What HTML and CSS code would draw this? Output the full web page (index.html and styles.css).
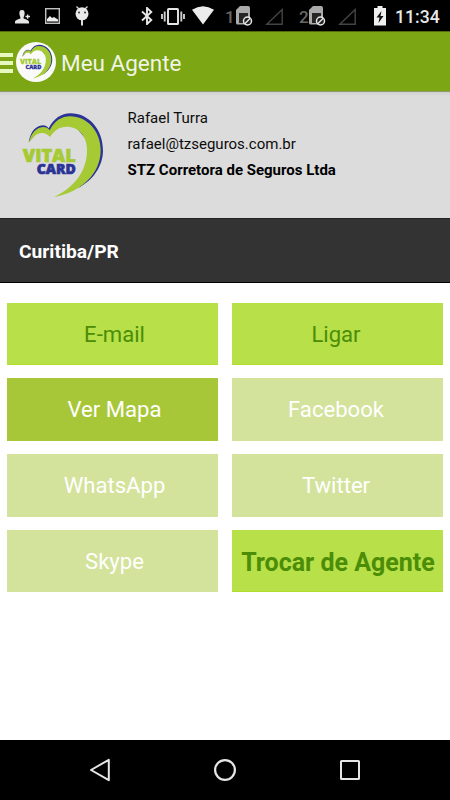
FILE: index.html
```html
<!DOCTYPE html>
<html lang="pt-BR">
<head>
<meta charset="utf-8">
<title>Meu Agente</title>
<link rel="stylesheet" href="styles.css">
</head>
<body>
<div class="screen">
  <div class="status">
    <svg class="person" width="15" height="14" viewBox="0 0 15 14"><path fill="#e6e6e6" d="M7 0C4.700 0 4 2 4.500 4.500 4.700 6 5.500 7 5.500 8.200 3.500 9.500 0 9.800 0 12v1.500h14V12C14 9.800 10.500 9.500 8.500 8.200 8.500 7 9.300 6 9.500 4.500 10 2 9.300 0 7 0zM12 4.500h1.300v1.300H15v1.400h-1.700v1.500H12V7.200h-1.500V5.800H12z"/></svg>
    <svg class="picture" width="15" height="16" viewBox="0 0 15 16"><rect x=".7" y=".7" width="13.600" height="14.600" fill="none" stroke="#c2c2c2" stroke-width="1.400"/><path fill="#eee" d="M2 13.500V11l3-3 2 2 2-1 1.500 1 2.500 1.500v2z"/></svg>
    <svg class="bot" width="14" height="20" viewBox="0 0 14 20"><path d="M1.500.5 4 3M12.500.5 10 3" stroke="#ddd" stroke-width="1.300"/><ellipse cx="7" cy="7.800" rx="6.500" ry="6.500" fill="#e8e8e8"/><path d="M7 14v5.500" stroke="#ddd" stroke-width="2"/><circle cx="4" cy="6.500" r="1" fill="#333"/><circle cx="10" cy="6.500" r="1" fill="#333"/></svg>
    <svg class="bluetooth" width="12" height="18" viewBox="0 0 12 18"><path d="M1 4.500l9.300 8.500L6 17V1l4.300 4L1 13.500" fill="none" stroke="#e6e6e6" stroke-width="1.900"/></svg>
    <svg class="vibrate" width="24" height="17" viewBox="0 0 24 17"><rect x="7" y="1" width="10" height="15" rx=".6" fill="none" stroke="#e6e6e6" stroke-width="1.900"/><path d="M1 6v5M23 6v5M3.700 3.500v10M20.300 3.500v10" stroke="#ccc" stroke-width="1.900"/></svg>
    <svg class="wifi" width="22" height="19" viewBox="0 0 22 19"><path fill="#ececec" d="M0 3.800Q11-3.200 22 3.800L11 18.500z"/></svg>
    <span class="slot slot-1">1</span>
    <svg class="sim" width="17" height="20" viewBox="0 0 17 20"><path d="M4 0h8q2 0 2 2v16.500H1.500Q0 18.500 0 17V4z" fill="#aaa"/><path d="M3 7h9v10H3z" fill="#262626"/><circle cx="11.500" cy="15" r="4" fill="#222" stroke="#e8e8e8" stroke-width="1.500"/><path d="M8.800 17.700l5.400-5.400" stroke="#e8e8e8" stroke-width="1.400"/></svg>
    <svg class="signal" width="18" height="17" viewBox="0 0 18 17"><path d="M1.800 16.200L17.200 1.500v14.700z" fill="none" stroke="#444" stroke-width="1.400"/></svg>
    <span class="slot slot-2">2</span>
    <svg class="sim sim-2" width="17" height="20" viewBox="0 0 17 20"><path d="M4 0h8q2 0 2 2v16.500H1.500Q0 18.500 0 17V4z" fill="#aaa"/><path d="M3 7h9v10H3z" fill="#262626"/><circle cx="11.500" cy="15" r="4" fill="#222" stroke="#e8e8e8" stroke-width="1.500"/><path d="M8.800 17.700l5.400-5.400" stroke="#e8e8e8" stroke-width="1.400"/></svg>
    <svg class="signal" width="18" height="17" viewBox="0 0 18 17"><path d="M1.800 16.200L17.200 1.500v14.700z" fill="none" stroke="#444" stroke-width="1.400"/></svg>
    <svg class="battery" width="12" height="20" viewBox="0 0 12 20"><path fill="#f0f0f0" d="M3.500 0h5v2H12v17.500H0V2h3.500z"/><path fill="#111" d="M7.500 5L2.500 11.500h3L4.500 17l5-7h-3z"/></svg>
    <span class="clock">11:34</span>
  </div>

  <header class="bar">
    <div class="menu"><i></i><i></i><i></i></div>
    <div class="avatar">
      <svg width="40" height="40" viewBox="8 19 299 299">
        <g id="logo">
          <path fill="#2b3396" d="M56 127C61 97 76 77 98 76C106 76 112 79 116 85C131 56 154 40 181 40C236 40 280 88 279 154C278 200 248 242 205 264C240 225 255 190 255 150L180 60L119 96L90 88Z"/>
          <path fill="#a6ca34" d="M56 129C62 101 79 82 99 81C108 81 115 84 119 91C134 62 155 49 180 49C231 49 272 93 272 151C272 220 214 278 132 291C190 264 231 216 231 150C231 108 206 80 170 80C149 80 132 91 120 111C111 101 101 97 89 100C75 104 66 114 56 129Z"/>
          <text class="logo-text" x="38" y="186" textLength="159" lengthAdjust="spacingAndGlyphs" font-size="53" fill="#a6ca34" stroke="#a6ca34">VITAL</text>
          <text class="logo-text" x="80" y="222" textLength="117" lengthAdjust="spacingAndGlyphs" font-size="41" fill="#2b3396" stroke="#2b3396">CARD</text>
        </g>
      </svg>
    </div>
    <h1 class="title">Meu Agente</h1>
  </header>

  <section class="agent">
    <svg class="agent-logo" width="110" height="110" viewBox="0 0 330 330"><use href="#logo"/></svg>
    <div class="agent-info">
      <div class="name">Rafael Turra</div>
      <div class="mail">rafael@tzseguros.com.br</div>
      <div class="company">STZ Corretora de Seguros Ltda</div>
    </div>
  </section>
  <div class="city"><span>Curitiba/PR</span></div>

  <main class="actions">
    <div class="btn lime left"><span>E-mail</span></div>
    <div class="btn lime right"><span>Ligar</span></div>
    <div class="btn olive left"><span>Ver Mapa</span></div>
    <div class="btn off right"><span>Facebook</span></div>
    <div class="btn off left"><span>WhatsApp</span></div>
    <div class="btn off right"><span>Twitter</span></div>
    <div class="btn off left"><span>Skype</span></div>
    <div class="btn lime strong"><span>Trocar de Agente</span></div>
  </main>

  <nav class="nav">
    <svg width="24" height="24" viewBox="0 0 24 24"><path d="M3 12L20.800 1.800v20.400z" fill="none" stroke="#e6e6e6" stroke-width="2" stroke-linejoin="round"/></svg>
    <svg width="24" height="24" viewBox="0 0 24 24"><circle cx="12" cy="12" r="9.900" fill="none" stroke="#e6e6e6" stroke-width="2.200"/></svg>
    <svg width="24" height="24" viewBox="0 0 24 24"><rect x="3" y="3" width="18" height="18" rx=".5" fill="none" stroke="#e6e6e6" stroke-width="2"/></svg>
  </nav>
</div>
</body>
</html>
```
FILE: styles.css
```css
* { box-sizing: border-box; }
body { margin: 0; font-family: Roboto, sans-serif; }
svg { display: block; flex: none; }
.screen { width: 450px; height: 800px; display: flex; flex-direction: column; background: #fff; overflow: hidden; }

.status { height: 31px; flex: none; background: #000; display: flex; align-items: center; padding-left: 15px; }
.person { margin-top: 3px; }
.picture { margin-left: 15px; }
.bot { margin-left: 15px; }
.bluetooth { margin-left: 52px; }
.vibrate { margin-left: 8px; margin-top: 1px; }
.wifi { margin-left: 7px; }
.slot { color: #686868; font-size: 17px; font-weight: 500; line-height: 20px; padding-top: 2px; width: 10px; flex: none; }
.slot-1 { margin-left: 11px; }
.slot-2 { margin-left: 16px; }
.sim { margin-left: 1px; }
.sim-2 { margin-left: 0; }
.signal { margin-left: 12px; margin-top: 2px; }
.battery { margin-left: 18px; }
.clock { margin-left: 9px; color: #e8e8e8; font-size: 17.600px; font-weight: 500; line-height: 20px; padding-top: 2px; }

.bar { height: 61px; flex: none; background: #7ca613; border-top: 1px solid #4f6b0b; border-bottom: 1px solid #8c9c6c; display: flex; align-items: center; }
.menu { width: 13px; display: flex; flex-direction: column; gap: 4px; margin-top: 3px; }
.menu i { height: 4px; background: #e6f8bd; }
.avatar { width: 40px; height: 40px; margin-left: 3px; border-radius: 50%; background: #fafafa; }
.title { margin: 2px 0 0 5px; font-size: 22.500px; font-weight: 400; line-height: 28px; color: #f0f4e5; }

.logo-text { font-family: "Open Sans", sans-serif; font-weight: 800; stroke-width: 2; }

.agent { height: 126px; flex: none; background: linear-gradient(#cfcfcf, #dcdcdc 4px); display: flex; padding: 8px 0 0 10px; }
.agent-info { padding: 5px 0 0 7.500px; font-size: 15px; line-height: 26px; color: #0c0c0c; white-space: nowrap; }
.company { font-weight: 700; color: #000; }

.city { height: 65px; flex: none; background: #333; border-top: 1px solid #222; border-bottom: 1px solid #000; display: flex; align-items: center; padding: 2px 0 0 19px; color: #fff; font-size: 19.200px; font-weight: 700; }

.actions { flex: 1; display: grid; grid-template-columns: 211px 211px; grid-auto-rows: 62.400px; gap: 13.400px 14px; align-content: start; padding: 19.600px 7px 0; }
.btn { display: flex; align-items: flex-start; justify-content: center; padding-top: 18px; font-size: 22.100px; line-height: 27px; white-space: nowrap; }
.left { padding-left: 4px; }
.right { padding-right: 3px; }
.lime { background: #b7e049; border-bottom: 1px solid #b2dd2b; color: #4b8d06; }
.olive { background: #a8c738; color: #fff; }
.off { background: #d3e39c; color: #fff; }
.strong { font-size: 25px; line-height: 29px; font-weight: 700; padding-left: 1px; padding-top: 18px; }

.nav { height: 60px; flex: none; background: #000; display: flex; justify-content: center; align-items: center; gap: 101px; }
```
